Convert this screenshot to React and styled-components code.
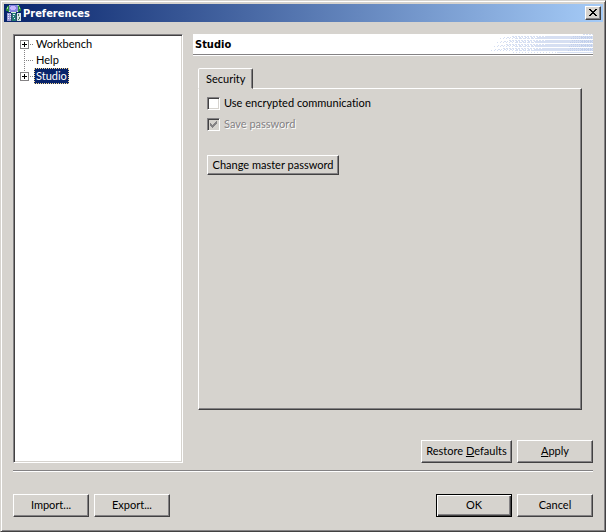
import { useState } from "react";
import styled, { createGlobalStyle } from "styled-components";

const GlobalStyle = createGlobalStyle`
  :root {
    --face: #d6d3ce;
    --light: #fff;
    --shadow: #848284;
    --dark: #424142;
    --navy: #08246b;
  }
  * {
    box-sizing: border-box;
  }
  body {
    margin: 0;
    background-color: var(--face);
    color: #000;
    font-family: Lato, sans-serif;
    font-size: 11px;
    font-variant-ligatures: none;
    line-height: 16px;
  }
  button, input {
    font: inherit;
    font-variant-ligatures: none;
    color: inherit;
  }
  h1, h2 {
    margin: 0;
    font-family: "DejaVu Sans Condensed", sans-serif;
    font-size: 11px;
  }
`;

const Window = styled.div`
  display: flex;
  flex-direction: column;
  min-height: 100vh;
  padding: 2px;
  background-color: var(--face);
  border: 1px solid;
  border-color: var(--face) var(--dark) var(--dark) var(--face);
  box-shadow: inset 1px 1px 0 var(--light), inset -1px -1px 0 var(--shadow);
`;

const TitleBar = styled.header`
  display: flex;
  align-items: center;
  gap: 1px;
  height: 18px;
  margin: 1px 0 0 1px;
  padding: 0 2px 0 1px;
  background: linear-gradient(to right, #08246b, #a5cbf7);
  color: #fff;
  h1 {
    flex: 1;
    padding-top: 1px;
    line-height: 18px;
  }
`;

const CloseButton = styled.button`
  display: grid;
  place-items: center;
  width: 16px;
  height: 14px;
  padding: 0 1px 1px 0;
  border: 1px solid;
  border-color: var(--light) var(--dark) var(--dark) var(--light);
  box-shadow: inset -1px -1px 0 var(--shadow);
  background-color: var(--face);
  color: #000;
`;

const Content = styled.div`
  flex: 1;
  display: grid;
  grid-template-columns: 170px 1fr;
  gap: 10px;
  margin: 12px 10px 0;
`;

const Tree = styled.ul`
  list-style: none;
  margin: 0;
  padding: 1px 6px;
  border: 1px solid;
  border-color: var(--shadow) var(--light) var(--light) var(--shadow);
  box-shadow: inset 1px 1px 0 var(--dark), inset -1px -1px 0 var(--face);
  background-color: #fff;
`;

const TreeItem = styled.li`
  display: flex;
  align-items: center;
  height: 16px;
`;

const TreeLabel = styled.button`
  height: 16px;
  padding: 0 1px;
  border: 1px ${(props) => (props.$selected ? "dotted #f7db94" : "solid #fff")};
  background-color: ${(props) => (props.$selected ? "var(--navy)" : "#fff")};
  color: ${(props) => (props.$selected ? "#fff" : "#000")};
  line-height: 14px;
  outline: none;
`;

const Page = styled.main`
  display: flex;
  flex-direction: column;
`;

const PageHeader = styled.div`
  display: flex;
  justify-content: space-between;
  height: 22px;
  padding-left: 2px;
  border-bottom: 1px solid var(--light);
  box-shadow: inset 0 -1px 0 var(--shadow);
  background-color: #fff;
  h2 {
    line-height: 21px;
  }
`;

const Tabs = styled.div`
  flex: 1;
  display: flex;
  flex-direction: column;
  align-items: flex-start;
  margin: 12px 11px 30px 5px;
`;

const Tab = styled.button`
  height: 21px;
  margin-bottom: -1px;
  padding: 0 7px;
  border: 1px solid;
  border-color: var(--light) var(--dark) transparent var(--light);
  border-radius: 2px 2px 0 0;
  box-shadow: inset -1px 0 0 var(--shadow);
  background-color: var(--face);
  line-height: 18px;
  z-index: 1;
`;

const TabPanel = styled.section`
  flex: 1;
  align-self: stretch;
  padding: 6px 8px;
  border: 1px solid;
  border-color: var(--light) var(--dark) var(--dark) var(--light);
  box-shadow: inset -1px -1px 0 var(--shadow);
`;

const CheckRow = styled.label`
  display: flex;
  align-items: center;
  gap: 4px;
  height: 16px;
  margin-bottom: 5px;
  color: ${(props) => (props.$disabled ? "var(--shadow)" : "#000")};
  text-shadow: ${(props) => (props.$disabled ? "1px 1px 0 #fff" : "none")};
`;

const CheckBox = styled.span`
  display: grid;
  place-items: center;
  input,
  svg {
    grid-area: 1 / 1;
  }
  svg {
    pointer-events: none;
  }
  input {
    appearance: none;
    width: 13px;
    height: 13px;
    margin: 0;
    border: 1px solid;
    border-color: var(--shadow) var(--light) var(--light) var(--shadow);
    box-shadow: inset 1px 1px 0 var(--dark), inset -1px -1px 0 var(--face);
    background-color: #fff;
  }
  input:disabled {
    background-color: var(--face);
  }
`;

const Button = styled.button`
  min-width: ${(props) => props.$width || "76px"};
  height: ${(props) => (props.$small ? "20px" : "23px")};
  padding: 0 4px 1px;
  border: 1px solid;
  border-color: var(--light) var(--dark) var(--dark) var(--light);
  box-shadow: inset -1px -1px 0 var(--shadow);
  background-color: var(--face);
  line-height: 16px;
  white-space: nowrap;
`;

const DefaultButton = styled(Button)`
  border-color: #000;
  box-shadow: inset 1px 1px 0 var(--light), inset -1px -1px 0 var(--dark),
    inset -2px -2px 0 var(--shadow);
`;

const MasterButton = styled(Button)`
  display: block;
  margin-top: 23px;
`;

const ButtonRow = styled.div`
  display: flex;
  justify-content: ${(props) => (props.$end ? "flex-end" : "flex-start")};
  gap: 5px;
`;

const Footer = styled.footer`
  display: flex;
  justify-content: space-between;
  margin: 7px 10px 12px;
  padding-top: 23px;
  border-top: 1px solid var(--shadow);
  box-shadow: inset 0 1px 0 var(--light);
`;

const AppIcon = () => (
  <svg width="17" height="18" viewBox="0 0 17 18" shapeRendering="crispEdges">
    <path d="M4 1h9v1h2v2h1v3h-2v1h-2V7H5v1H3V7H1V4h1V2h2z" fill="#2a8a3c" />
    <path d="M5 1h7v1h1v5h-1v1h-1v1H6V8H5V7H4V2h1z" fill="#8482de" />
    <path d="M6 2h4v1h1v2h-1v1H6V5H5V3h1z" fill="#c6b6ff" />
    <path d="M4 1h1v1H4zM12 1h2v1h-2zM2 3h1v2H2zM14 3h1v2h-1z" fill="#a5dfa5" />
    <path d="M4 7h1v1H4zM12 7h1v1h-1zM6 8h5v1H6z" fill="#d6f3d6" />
    <path d="M2 9h4v8H2z" fill="#9c9ad6" />
    <path d="M7 9h4v8H7z" fill="#217973" />
    <path d="M12 9h4v8h-4z" fill="#d6e7e7" />
    <path d="M6 10h1v7H6zM11 10h1v7h-1z" fill="#31496b" />
    <path
      d="M3 10h1v1H3zM5 10h1v1H5zM3 12h1v1H3zM5 12h1v1H5zM3 14h1v1H3zM5 14h1v1H5zM8 10h2v1H8zM8 12h1v1H8zM9 14h1v1H9z"
      fill="#e7e7ff"
    />
    <path d="M13 10h1v2h-1zM14 13h1v2h-1zM13 15h1v1h-1z" fill="#52796b" />
  </svg>
);

const CloseIcon = () => (
  <svg width="8" height="7" viewBox="0 0 8 7" shapeRendering="crispEdges">
    <path d="M0 0h2v1h1v1h2V1h1V0h2v1H7v1H6v1H5v1h1v1h1v1h1v1H6V6H5V5H3v1H2v1H0V6h1V5h1V4h1V3H2V2H1V1H0z" />
  </svg>
);

const CheckMark = () => (
  <svg width="7" height="7" viewBox="0 0 7 7" shapeRendering="crispEdges">
    <path
      d="M0 2h1v1h1v1h1V3h1V2h1V1h1V0h1v3H6v1H5v1H4v1H3v1H2V6H1V5H0z"
      fill="#848284"
    />
  </svg>
);

const Branch = ({ expandable, first, last }) => (
  <svg width="14" height="16" viewBox="0 0 14 16" shapeRendering="crispEdges">
    <g fill="none" stroke="#848284" strokeDasharray="1 1">
      {!first && <path d="M4.5 0V8" />}
      {!last && <path d="M4.5 8V16" />}
      <path d="M4 8.5H14" />
    </g>
    {expandable && (
      <>
        <path d="M.5 4.5h8v8h-8z" fill="#fff" stroke="#848284" />
        <path d="M2 8.5h5M4.5 6v5" stroke="#000" />
      </>
    )}
  </svg>
);

const stripes = [2, 6, 10, 14];

// dithered stripes that fade out to the left
const HeaderArt = () => (
  <svg width="102" height="20" viewBox="0 0 102 20" shapeRendering="crispEdges">
    {stripes.map((y, i) => (
      <g key={y} stroke="#d6dff2">
        <path d={`M${56 - i} ${y + 0.5}H102`} />
        <path d={`M${46 - i} ${y + 1.5}H102M${46 - i} ${y + 2.5}H102`} />
        <path d={`M${21 - i * 3} ${y + 0.5}H58`} strokeDasharray="2 1" />
        <path d={`M${13 - i * 3} ${y + 1.5}H48`} strokeDasharray="1 2 2 1" />
        <path d={`M${9 - i * 3} ${y + 2.5}H24`} strokeDasharray="1 2" />
        <path d={`M24 ${y + 2.5}H48`} strokeDasharray="3 1" />
        <path
          d={`M${82 - i} ${y + 0.5}H102M${80 - i} ${y + 2.5}H102`}
          stroke="#c1cfeb"
          strokeDasharray="1 1"
        />
        <path d={`M90 ${y + 1.5}H102`} stroke="#c1cfeb" strokeDasharray="2 1" />
      </g>
    ))}
    <path d="M22 18.5H68" stroke="#d6dff2" strokeDasharray="1 2" />
    <path d="M66 18.5H102" stroke="#d6dff2" />
    <path d="M92 .5H102" stroke="#d6dff2" strokeDasharray="2 1" />
  </svg>
);

const items = [
  { name: "Workbench", expandable: true },
  { name: "Help", expandable: false },
  { name: "Studio", expandable: true },
];

const App = () => {
  const [selected, setSelected] = useState("Studio");
  const [encrypted, setEncrypted] = useState(false);

  return (
    <>
      <GlobalStyle />
      <Window>
        <TitleBar>
          <AppIcon />
          <h1>Preferences</h1>
          <CloseButton aria-label="Close">
            <CloseIcon />
          </CloseButton>
        </TitleBar>
        <Content>
          <Tree>
            {items.map((item, i) => (
              <TreeItem key={item.name}>
                <Branch
                  expandable={item.expandable}
                  first={i === 0}
                  last={i === items.length - 1}
                />
                <TreeLabel
                  $selected={selected === item.name}
                  onClick={() => setSelected(item.name)}
                >
                  {item.name}
                </TreeLabel>
              </TreeItem>
            ))}
          </Tree>
          <Page>
            <PageHeader>
              <h2>Studio</h2>
              <HeaderArt />
            </PageHeader>
            <Tabs>
              <Tab role="tab" aria-selected="true">
                Security
              </Tab>
              <TabPanel role="tabpanel">
                <CheckRow>
                  <CheckBox>
                    <input
                      type="checkbox"
                      checked={encrypted}
                      onChange={(e) => setEncrypted(e.target.checked)}
                    />
                    {encrypted && <CheckMark />}
                  </CheckBox>
                  Use encrypted communication
                </CheckRow>
                <CheckRow $disabled>
                  <CheckBox>
                    <input type="checkbox" checked disabled readOnly />
                    <CheckMark />
                  </CheckBox>
                  Save password
                </CheckRow>
                <MasterButton $small $width="132px">
                  Change master password
                </MasterButton>
              </TabPanel>
            </Tabs>
            <ButtonRow $end>
              <Button $width="91px">
                Restore <u>D</u>efaults
              </Button>
              <Button>
                <u>A</u>pply
              </Button>
            </ButtonRow>
          </Page>
        </Content>
        <Footer>
          <ButtonRow>
            <Button>Import...</Button>
            <Button>Export...</Button>
          </ButtonRow>
          <ButtonRow $end>
            <DefaultButton>OK</DefaultButton>
            <Button>Cancel</Button>
          </ButtonRow>
        </Footer>
      </Window>
    </>
  );
};

export default App;
